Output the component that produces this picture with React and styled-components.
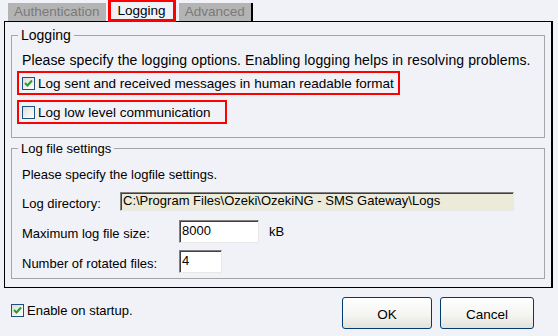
import React from 'react';
import styled, { createGlobalStyle } from 'styled-components';

const GlobalStyle = createGlobalStyle`
  html, body {
    margin: 0;
    padding: 0;
    background: #f1f2f7;
  }
  body {
    font-family: "Liberation Sans", Arial, sans-serif;
    font-size: 13px;
    color: #000;
  }
`;

const CheckBox = ({ checked }) => (
  <Box>
    {checked && (
      <svg width="9" height="9" viewBox="0 0 9 9">
        <path d="M1 4 L3.5 6.5 L8 1.5" fill="none" stroke="#21a121" strokeWidth="2" />
      </svg>
    )}
  </Box>
);

const App = () => {
  return (
    <Window>
      <GlobalStyle />
      <TabStrip>
        <Tab>Authentication</Tab>
        <Tab active>Logging</Tab>
        <Tab last>Advanced</Tab>
      </TabStrip>
      <Panel>
        <Group>
          <Legend large>Logging</Legend>
          <Note large>Please specify the logging options. Enabling logging helps in resolving problems.</Note>
          <Marked>
            <CheckBox checked />
            <span>Log sent and received messages in human readable format</span>
          </Marked>
          <Marked width={210}>
            <CheckBox />
            <span>Log low level communication</span>
          </Marked>
        </Group>
        <Group second>
          <Legend>Log file settings</Legend>
          <Note>Please specify the logfile settings.</Note>
          <FieldRow>
            <Label>Log directory:</Label>
            <Input width={394} readOnly value={'C:\\Program Files\\Ozeki\\OzekiNG - SMS Gateway\\Logs'} />
          </FieldRow>
          <FieldRow>
            <Label wide>Maximum log file size:</Label>
            <Input width={80} white readOnly value="8000" />
            <Unit>kB</Unit>
          </FieldRow>
          <FieldRow>
            <Label wide>Number of rotated files:</Label>
            <Input width={43} white readOnly value="4" />
          </FieldRow>
        </Group>
      </Panel>
      <Footer>
        <StartupCheck>
          <CheckBox checked />
          <span>Enable on startup.</span>
        </StartupCheck>
        <Buttons>
          <Button>OK</Button>
          <Button wide>Cancel</Button>
        </Buttons>
      </Footer>
    </Window>
  );
};

const Window = styled.div`
  width: 558px;
  height: 336px;
  box-sizing: border-box;
  padding: 0 5px 0 4px;
  background: #f1f2f7;
  overflow: hidden;
`;

const TabStrip = styled.div`
  display: flex;
  align-items: flex-end;
  height: 22px;
  padding-left: 4px;
  margin-bottom: -1px;
  position: relative;
  z-index: 1;
`;

const Tab = styled.div`
  box-sizing: border-box;
  height: ${(p) => (p.active ? '23px' : '18px')};
  margin-bottom: ${(p) => (p.active ? '0' : '1px')};
  padding: ${(p) => (p.active ? '1px 7px 0 7px' : '0 6px')};
  margin-left: ${(p) => (p.active ? '2px' : '0')};
  margin-right: ${(p) => (p.active ? '3px' : '0')};
  background: ${(p) => (p.active ? '#f1f2f7' : '#b4b4b4')};
  color: ${(p) => (p.active ? '#000' : '#7a7a7a')};
  border: ${(p) => (p.active ? '3px solid #f00' : 'none')};
  border-right: ${(p) => (p.last ? '2px solid #000' : p.active ? '3px solid #f00' : 'none')};
  line-height: ${(p) => (p.active ? '16px' : '18px')};
  font-size: 13.5px;
  white-space: nowrap;
`;

const Panel = styled.div`
  box-sizing: border-box;
  height: 267px;
  border: 1px solid #000;
  border-right-width: 2px;
  padding: 6px 6px 0 6px;
`;

const Group = styled.fieldset`
  box-sizing: border-box;
  margin: ${(p) => (p.second ? '3px 0 0 0' : '0')};
  height: ${(p) => (p.second ? '138px' : '110px')};
  border: 1px solid #a5a5a5;
  padding: 4px 6px 0 10px;
  display: flex;
  flex-direction: column;
  align-items: flex-start;
`;

const Legend = styled.legend`
  padding: 0 3px;
  margin-left: -4px;
  line-height: 15px;
  font-size: ${(p) => (p.large ? '14px' : '13px')};
`;

const Note = styled.div`
  line-height: 15px;
  margin: ${(p) => (p.large ? '6px 0 3px 0' : '7px 0 4px 0')};
  font-size: ${(p) => (p.large ? '14px' : '13px')};
  letter-spacing: ${(p) => (p.large ? '0.1px' : '0')};
`;

const Marked = styled.div`
  box-sizing: border-box;
  display: flex;
  align-items: center;
  gap: 3px;
  height: 24px;
  width: ${(p) => (p.width ? `${p.width}px` : 'auto')};
  padding: 0 4px 0 3px;
  margin: 0 0 5px -5px;
  border: 2px solid #f00;
  font-size: 13.5px;
`;

const Box = styled.span`
  box-sizing: border-box;
  width: 13px;
  height: 13px;
  border: 1px solid #1c5180;
  background: linear-gradient(135deg, #dcdcd7 0%, #f5f5f2 70%, #fff 100%);
  display: inline-flex;
  align-items: center;
  justify-content: center;
  flex-shrink: 0;
`;

const FieldRow = styled.div`
  display: flex;
  align-items: center;
  height: 30px;
`;

const Label = styled.span`
  width: ${(p) => (p.wide ? '157px' : '98px')};
  padding-top: 4px;
`;

const Input = styled.input`
  box-sizing: border-box;
  width: ${(p) => p.width}px;
  height: ${(p) => (p.white ? '23px' : '19px')};
  border: 1px solid;
  border-color: #808080 #e8e8e8 #e8e8e8 #808080;
  box-shadow: inset 1px 1px 0 #404040;
  background: ${(p) => (p.white ? '#fff' : '#ecead8')};
  font: inherit;
  padding: 0 0 2px 2px;
  color: #000;
  outline: none;
`;

const Unit = styled.span`
  margin-left: 10px;
`;

const Footer = styled.div`
  display: flex;
  justify-content: space-between;
  align-items: flex-start;
  padding: 9px 19px 0 7px;
`;

const StartupCheck = styled.div`
  display: flex;
  align-items: center;
  gap: 3px;
  margin-top: 6px;
`;

const Buttons = styled.div`
  display: flex;
  gap: 8px;
`;

const Button = styled.button`
  box-sizing: border-box;
  width: ${(p) => (p.wide ? '94px' : '90px')};
  height: 32px;
  border: 1px solid #003c74;
  border-radius: 3px;
  background: linear-gradient(#ffffff 0%, #f4f4f0 60%, #e2e1da 100%);
  font: inherit;
  font-size: 13.5px;
  color: #000;
  padding-top: 3px;
`;

export default App;
